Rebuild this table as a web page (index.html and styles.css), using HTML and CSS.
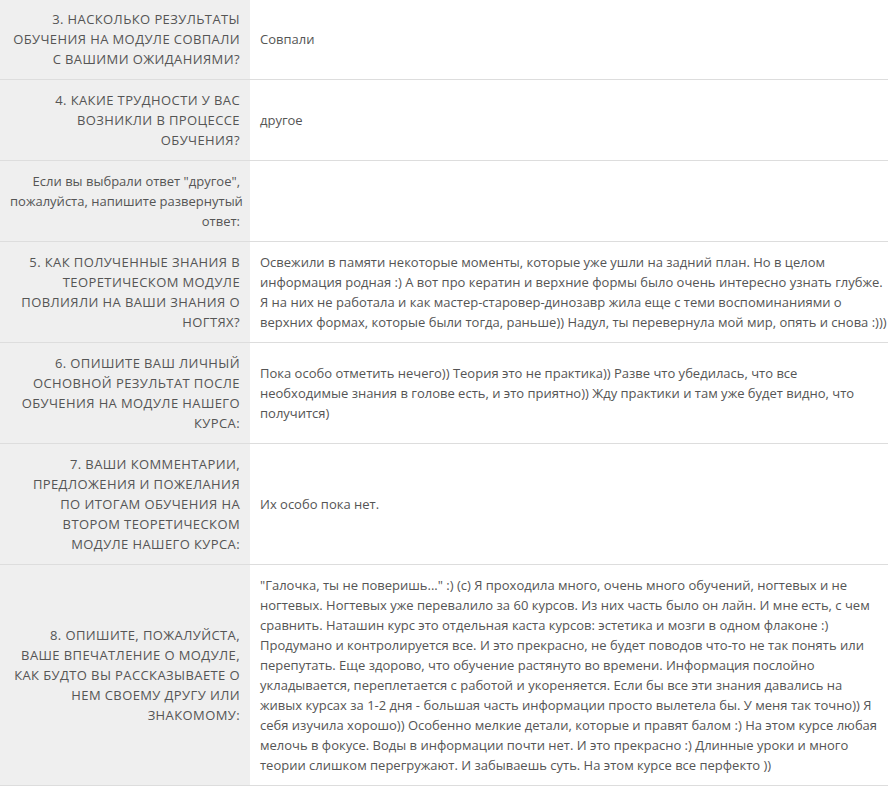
FILE: index.html
```html
<!DOCTYPE html>
<html lang="ru">
<head>
    <meta charset="UTF-8">
    <meta name="viewport" content="width=device-width, initial-scale=1.0">
    <title>Анкета обратной связи</title>
    <link rel="stylesheet" href="styles.css">
</head>
<body>
    <table class="answers">
        <colgroup>
            <col class="col-question">
            <col class="col-answer">
        </colgroup>
        <tbody>
            <tr>
                <th class="caps">3. Насколько результаты<br>обучения на модуле совпали<br>с вашими ожиданиями?</th>
                <td>Совпали</td>
            </tr>
            <tr>
                <th class="caps">4. Какие трудности у вас<br>возникли в процессе<br>обучения?</th>
                <td>другое</td>
            </tr>
            <tr>
                <th>Если вы выбрали ответ "другое",<br>пожалуйста, напишите развернутый<br>ответ:</th>
                <td></td>
            </tr>
            <tr>
                <th class="caps">5. Как полученные знания в<br>теоретическом модуле<br>повлияли на ваши знания о<br>ногтях?</th>
                <td>Освежили в памяти некоторые моменты, которые уже ушли на задний план. Но в целом<br>информация родная :) А вот про кератин и верхние формы было очень интересно узнать глубже.<br>Я на них не работала и как мастер-старовер-динозавр жила еще с теми воспоминаниями о<br>верхних формах, которые были тогда, раньше)) Надул, ты перевернула мой мир, опять и снова :)))</td>
            </tr>
            <tr>
                <th class="caps">6. Опишите ваш личный<br>основной результат после<br>обучения на модуле нашего<br>курса:</th>
                <td>Пока особо отметить нечего)) Теория это не практика)) Разве что убедилась, что все<br>необходимые знания в голове есть, и это приятно)) Жду практики и там уже будет видно, что<br>получится)</td>
            </tr>
            <tr>
                <th class="caps">7. Ваши комментарии,<br>предложения и пожелания<br>по итогам обучения на<br>втором теоретическом<br>модуле нашего курса:</th>
                <td>Их особо пока нет.</td>
            </tr>
            <tr>
                <th class="caps">8. Опишите, пожалуйста,<br>ваше впечатление о модуле,<br>как будто вы рассказываете о<br>нем своему другу или<br>знакомому:</th>
                <td>"Галочка, ты не поверишь..." :) (с) Я проходила много, очень много обучений, ногтевых и не<br>ногтевых. Ногтевых уже перевалило за 60 курсов. Из них часть было он лайн. И мне есть, с чем<br>сравнить. Наташин курс это отдельная каста курсов: эстетика и мозги в одном флаконе :)<br>Продумано и контролируется все. И это прекрасно, не будет поводов что-то не так понять или<br>перепутать. Еще здорово, что обучение растянуто во времени. Информация послойно<br>укладывается, переплетается с работой и укореняется. Если бы все эти знания давались на<br>живых курсах за 1-2 дня - большая часть информации просто вылетела бы. У меня так точно)) Я<br>себя изучила хорошо)) Особенно мелкие детали, которые и правят балом :) На этом курсе любая<br>мелочь в фокусе. Воды в информации почти нет. И это прекрасно :) Длинные уроки и много<br>теории слишком перегружают. И забываешь суть. На этом курсе все перфекто ))</td>
            </tr>
        </tbody>
    </table>
</body>
</html>
```

FILE: styles.css
```css
body {
    font-family: "Open Sans", Arial, sans-serif;
    font-size: 13px;
    color: #555;
    margin: 0;
    padding: 0;
    background-color: #fff;
}
.answers {
    width: 888px;
    margin-top: -2px;
    border-collapse: collapse;
    table-layout: fixed;
}
.col-question {
    width: 250px;
}
th, td {
    padding: 10px;
    line-height: 20px;
    vertical-align: middle;
    white-space: nowrap;
    border-top: 1px solid #ddd;
    border-bottom: 1px solid #ddd;
}
th {
    background-color: #efefef;
    font-weight: normal;
    text-align: right;
}
th.caps {
    text-transform: uppercase;
    letter-spacing: 0.4px;
}
td {
    text-align: left;
}
```
